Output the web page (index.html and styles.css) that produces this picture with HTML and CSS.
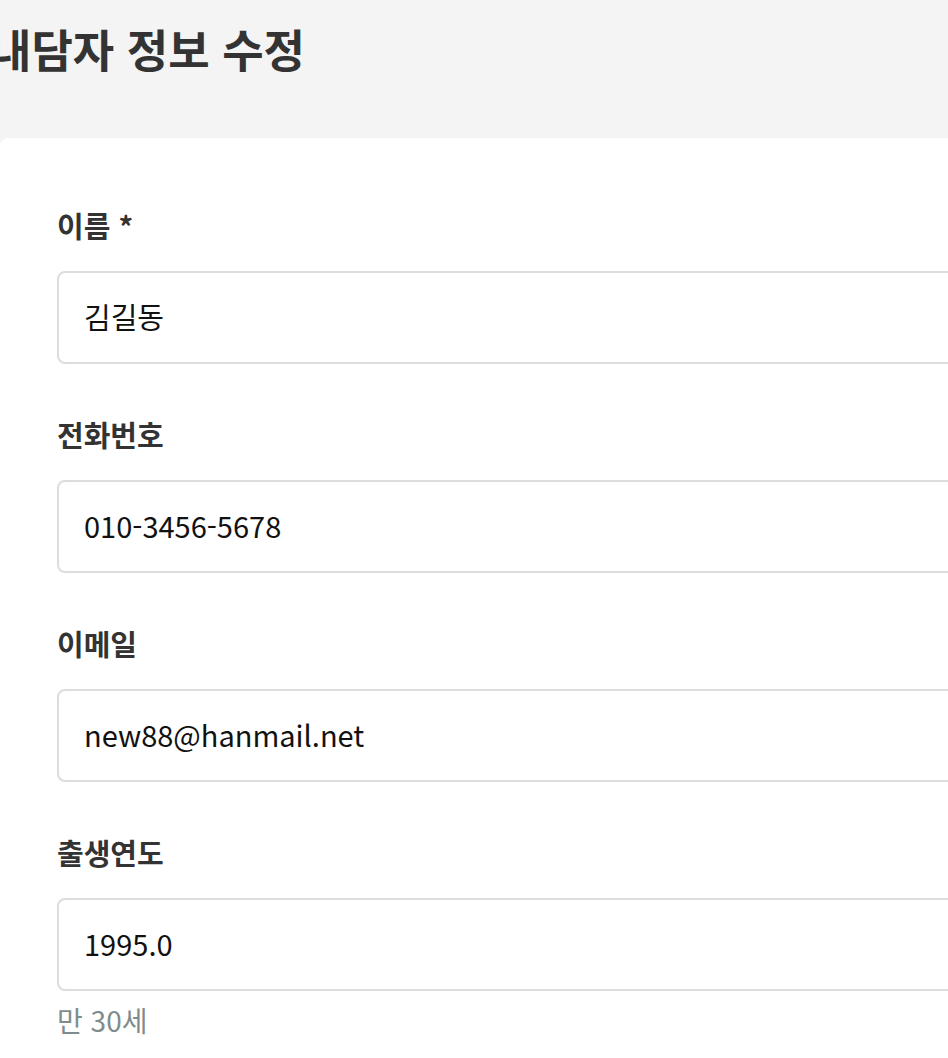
FILE: index.html
```html
<!DOCTYPE html>
<html lang="ko">
<head>
<meta charset="utf-8">
<title>내담자 정보 수정</title>
<link rel="stylesheet" href="styles.css">
</head>
<body>
<header class="page-header">
  <h1 class="page-title">내담자 정보 수정</h1>
</header>
<main class="card">
  <div class="field">
    <label class="field-label" for="name">이름 *</label>
    <input class="field-input" id="name" type="text" value="김길동" readonly>
  </div>
  <div class="field">
    <label class="field-label" for="phone">전화번호</label>
    <input class="field-input" id="phone" type="text" value="010-3456-5678" readonly>
  </div>
  <div class="field">
    <label class="field-label" for="email">이메일</label>
    <input class="field-input" id="email" type="text" value="new88@hanmail.net" readonly>
  </div>
  <div class="field">
    <label class="field-label" for="birth">출생연도</label>
    <input class="field-input" id="birth" type="text" value="1995.0" readonly>
    <p class="field-help">만 30세</p>
  </div>
</main>
</body>
</html>
```
FILE: styles.css
```css
html, body {
  margin: 0;
  padding: 0;
}
body {
  background: #f4f4f4;
  font-family: "Noto Sans CJK KR", "Noto Sans", sans-serif;
  overflow: hidden;
  width: 948px;
  height: 1058px;
}
.page-header {
  height: 138px;
  display: flex;
  align-items: flex-start;
}
.page-title {
  margin: 20px 0 0 -10px;
  font-size: 45px;
  line-height: 58px;
  font-weight: 700;
  color: #333333;
}
.card {
  background: #ffffff;
  width: 1200px;
  min-height: 1000px;
  border-radius: 8px 0 0 0;
  padding: 69px 0 0 57px;
  box-sizing: border-box;
}
.field {
  display: flex;
  flex-direction: column;
  margin-bottom: 52px;
}
.field-label {
  font-size: 29px;
  line-height: 36px;
  font-weight: 700;
  color: #333333;
  margin-bottom: 28px;
}
.field-input {
  box-sizing: border-box;
  width: 1100px;
  height: 93px;
  border: 2px solid #dddddd;
  border-radius: 8px;
  padding: 0 25px 4px;
  font-family: inherit;
  font-size: 29px;
  color: #111111;
  background: #ffffff;
  outline: none;
}
.field-help {
  margin: 12px 0 0 0;
  font-size: 28px;
  line-height: 34px;
  color: #7f8c8d;
}
```
